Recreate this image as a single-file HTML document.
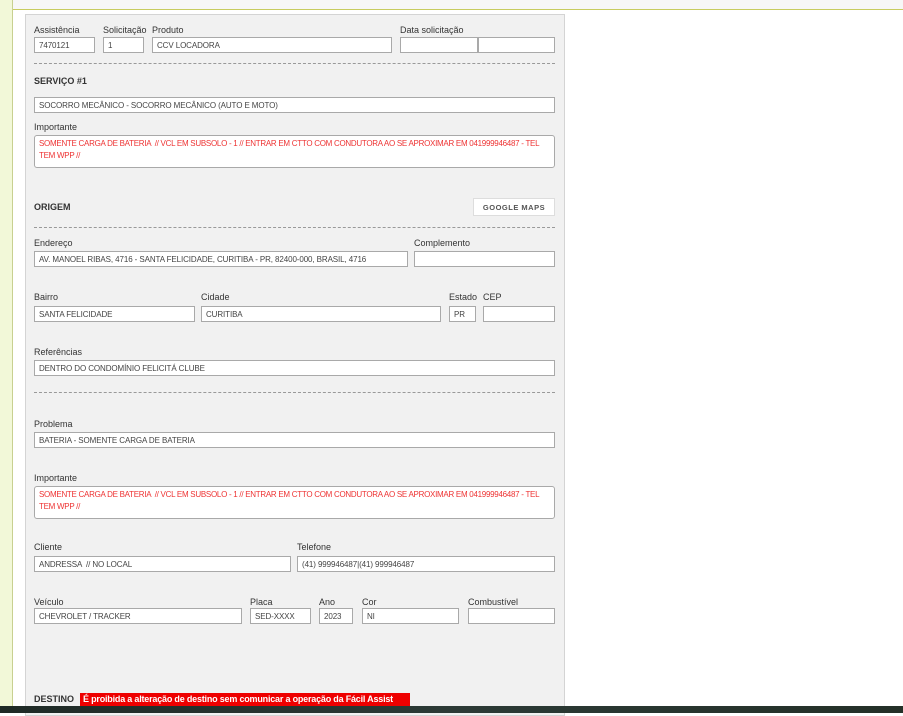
<!DOCTYPE html>
<html><head><meta charset="utf-8"><style>
body{margin:0;width:903px;height:713px;overflow:hidden;background:#fff;font-family:"Liberation Sans","DejaVu Sans",sans-serif;position:relative}
.a{position:absolute}
.l{position:absolute;font-size:9px;color:#333}
.i{position:absolute;height:16px;border:1px solid #a9a9a9;background:#fff;font-size:8px;color:#444;line-height:16px;padding-left:4px;box-sizing:border-box;white-space:nowrap;overflow:hidden;letter-spacing:-0.1px}
.t{position:absolute;border:1px solid #a9a9a9;border-radius:3px;background:#fff;font-size:8px;color:#e33;line-height:12px;padding:2px 14px 2px 4px;box-sizing:border-box;letter-spacing:-0.28px}
.h{position:absolute;font-size:9px;font-weight:bold;color:#333}
.d{position:absolute;left:34px;width:521px;border-top:1px dashed #999}
</style></head><body>
<div class="a" style="left:0;top:0;width:12px;height:713px;background:#f2f8d8;border-right:1px solid #c8d090"></div>
<div class="a" style="left:13px;top:0;width:890px;height:9px;background:#f7f7f7;border-bottom:1px solid #c8cc60"></div>
<div class="a" style="left:25px;top:14px;width:538px;height:700px;background:#f1f1f1;border:1px solid #d4d4d4"></div>

<div class="l" style="left:34px;top:25px">Assistência</div>
<div class="l" style="left:103px;top:25px">Solicitação</div>
<div class="l" style="left:152px;top:25px">Produto</div>
<div class="l" style="left:400px;top:25px">Data solicitação</div>
<div class="i" style="left:34px;top:37px;width:61px">7470121</div>
<div class="i" style="left:103px;top:37px;width:41px">1</div>
<div class="i" style="left:152px;top:37px;width:240px">CCV LOCADORA</div>
<div class="i" style="left:400px;top:37px;width:78px"></div>
<div class="i" style="left:478px;top:37px;width:77px"></div>
<div class="d" style="top:63px"></div>

<div class="h" style="left:34px;top:76px">SERVIÇO #1</div>
<div class="i" style="left:34px;top:97px;width:521px">SOCORRO MECÂNICO - SOCORRO MECÂNICO (AUTO E MOTO)</div>
<div class="l" style="left:34px;top:122px">Importante</div>
<div class="t" style="left:34px;top:135px;width:521px;height:33px">SOMENTE CARGA DE BATERIA &nbsp;// VCL EM SUBSOLO - 1 // ENTRAR EM CTTO COM CONDUTORA AO SE APROXIMAR EM 041999946487 - TEL TEM WPP //</div>

<div class="h" style="left:34px;top:202px">ORIGEM</div>
<div class="a" style="left:473px;top:198px;width:82px;height:18px;background:#fff;border:1px solid #ddd;box-sizing:border-box;font-size:7.5px;font-weight:bold;color:#555;text-align:center;line-height:17px;letter-spacing:.5px">GOOGLE MAPS</div>
<div class="d" style="top:227px"></div>

<div class="l" style="left:34px;top:238px">Endereço</div>
<div class="l" style="left:414px;top:238px">Complemento</div>
<div class="i" style="left:34px;top:251px;width:374px">AV. MANOEL RIBAS, 4716 - SANTA FELICIDADE, CURITIBA - PR, 82400-000, BRASIL, 4716</div>
<div class="i" style="left:414px;top:251px;width:141px"></div>

<div class="l" style="left:34px;top:292px">Bairro</div>
<div class="l" style="left:201px;top:292px">Cidade</div>
<div class="l" style="left:449px;top:292px">Estado</div>
<div class="l" style="left:483px;top:292px">CEP</div>
<div class="i" style="left:34px;top:306px;width:161px">SANTA FELICIDADE</div>
<div class="i" style="left:201px;top:306px;width:240px">CURITIBA</div>
<div class="i" style="left:449px;top:306px;width:27px">PR</div>
<div class="i" style="left:483px;top:306px;width:72px"></div>

<div class="l" style="left:34px;top:347px">Referências</div>
<div class="i" style="left:34px;top:360px;width:521px">DENTRO DO CONDOMÍNIO FELICITÁ CLUBE</div>
<div class="d" style="top:392px"></div>

<div class="l" style="left:34px;top:419px">Problema</div>
<div class="i" style="left:34px;top:432px;width:521px">BATERIA - SOMENTE CARGA DE BATERIA</div>
<div class="l" style="left:34px;top:473px">Importante</div>
<div class="t" style="left:34px;top:486px;width:521px;height:33px">SOMENTE CARGA DE BATERIA &nbsp;// VCL EM SUBSOLO - 1 // ENTRAR EM CTTO COM CONDUTORA AO SE APROXIMAR EM 041999946487 - TEL TEM WPP //</div>

<div class="l" style="left:34px;top:542px">Cliente</div>
<div class="l" style="left:297px;top:542px">Telefone</div>
<div class="i" style="left:34px;top:556px;width:257px">ANDRESSA &nbsp;// NO LOCAL</div>
<div class="i" style="left:297px;top:556px;width:258px">(41) 999946487|(41) 999946487</div>

<div class="l" style="left:34px;top:597px">Veículo</div>
<div class="l" style="left:250px;top:597px">Placa</div>
<div class="l" style="left:319px;top:597px">Ano</div>
<div class="l" style="left:362px;top:597px">Cor</div>
<div class="l" style="left:468px;top:597px">Combustível</div>
<div class="i" style="left:34px;top:608px;width:208px">CHEVROLET / TRACKER</div>
<div class="i" style="left:250px;top:608px;width:61px">SED-XXXX</div>
<div class="i" style="left:319px;top:608px;width:34px">2023</div>
<div class="i" style="left:362px;top:608px;width:97px">NI</div>
<div class="i" style="left:468px;top:608px;width:87px"></div>

<div class="h" style="left:34px;top:694px">DESTINO</div>
<div class="a" style="left:80px;top:693px;width:330px;height:13px;background:#e00;color:#fff;font-size:9px;font-weight:bold;line-height:12px;padding-left:3px;box-sizing:border-box;white-space:nowrap;overflow:hidden;letter-spacing:-0.2px">É proibida a alteração de destino sem comunicar a operação da Fácil Assist</div>
<div class="a" style="left:0;top:706px;width:903px;height:7px;background:linear-gradient(90deg,#1f2a26,#2c3a36 50%,#243028)"></div>
</body></html>
